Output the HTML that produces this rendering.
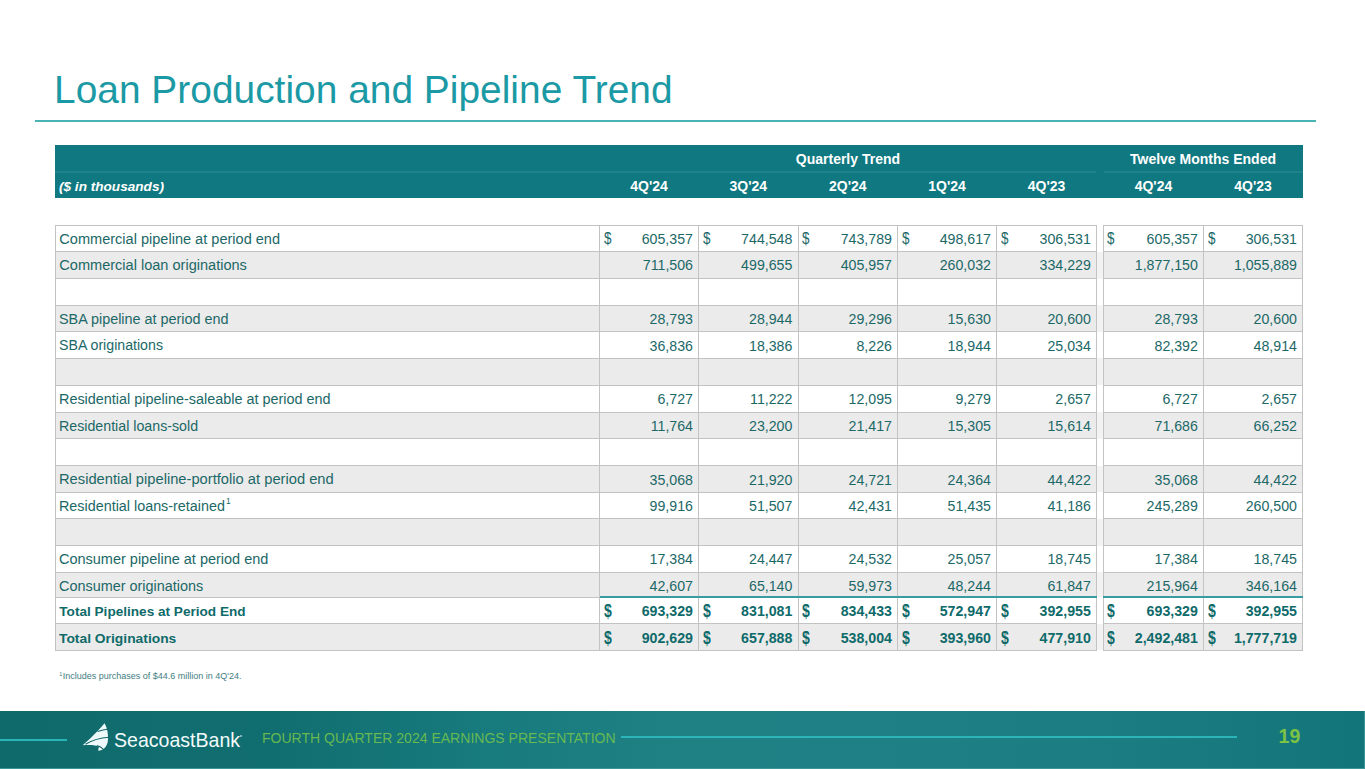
<!DOCTYPE html>
<html><head><meta charset="utf-8"><style>
html,body{margin:0;padding:0;}
body{width:1365px;height:769px;position:relative;overflow:hidden;background:#fff;font-family:"Liberation Sans", sans-serif;}
sup{font-size:8.5px;vertical-align:0;position:relative;top:-7px;margin-left:1px;}
</style></head><body>
<div style="position:absolute;top:70.49px;font-size:39.0px;line-height:39.0px;color:#1b9aa5;font-weight:normal;font-style:normal;white-space:nowrap;left:54.10px;transform:scaleX(0.9975);transform-origin:0 0;">Loan Production and Pipeline Trend</div>
<div style="position:absolute;left:34.5px;top:119.6px;width:1281.3px;height:2.0px;background:#48b4b3;"></div>
<div style="position:absolute;left:55.2px;top:145.3px;width:1247.8px;height:52.8px;background:#107880;"></div>
<div style="position:absolute;left:55.2px;top:171.4px;width:1041.2px;height:1.2px;background:#1f838b;"></div>
<div style="position:absolute;left:1103.6px;top:171.4px;width:199.4px;height:1.2px;background:#1f838b;"></div>
<div style="position:absolute;top:152.05px;font-size:14px;line-height:14px;color:#fff;font-weight:bold;font-style:normal;white-space:nowrap;left:697.95px;width:300px;text-align:center;">Quarterly Trend</div>
<div style="position:absolute;top:152.05px;font-size:14px;line-height:14px;color:#fff;font-weight:bold;font-style:normal;white-space:nowrap;left:1053.00px;width:300px;text-align:center;">Twelve Months Ended</div>
<div style="position:absolute;top:179.69px;font-size:13.6px;line-height:13.6px;color:#fff;font-weight:bold;font-style:italic;white-space:nowrap;left:59.00px;">($ in thousands)</div>
<div style="position:absolute;top:179.35px;font-size:14px;line-height:14px;color:#fff;font-weight:bold;font-style:normal;white-space:nowrap;left:499.05px;width:300px;text-align:center;">4Q'24</div>
<div style="position:absolute;top:179.35px;font-size:14px;line-height:14px;color:#fff;font-weight:bold;font-style:normal;white-space:nowrap;left:598.30px;width:300px;text-align:center;">3Q'24</div>
<div style="position:absolute;top:179.35px;font-size:14px;line-height:14px;color:#fff;font-weight:bold;font-style:normal;white-space:nowrap;left:697.80px;width:300px;text-align:center;">2Q'24</div>
<div style="position:absolute;top:179.35px;font-size:14px;line-height:14px;color:#fff;font-weight:bold;font-style:normal;white-space:nowrap;left:797.10px;width:300px;text-align:center;">1Q'24</div>
<div style="position:absolute;top:179.35px;font-size:14px;line-height:14px;color:#fff;font-weight:bold;font-style:normal;white-space:nowrap;left:896.50px;width:300px;text-align:center;">4Q'23</div>
<div style="position:absolute;top:179.35px;font-size:14px;line-height:14px;color:#fff;font-weight:bold;font-style:normal;white-space:nowrap;left:1003.45px;width:300px;text-align:center;">4Q'24</div>
<div style="position:absolute;top:179.35px;font-size:14px;line-height:14px;color:#fff;font-weight:bold;font-style:normal;white-space:nowrap;left:1103.05px;width:300px;text-align:center;">4Q'23</div>
<div style="position:absolute;top:231.78px;font-size:14.55px;line-height:14.55px;color:#1c6867;font-weight:normal;font-style:normal;white-space:nowrap;left:59.30px;">Commercial pipeline at period end</div>
<div style="position:absolute;top:232.08px;font-size:14.2px;line-height:14.2px;color:#1c6867;font-weight:normal;font-style:normal;white-space:nowrap;right:672.00px;">605,357</div>
<div style="position:absolute;top:231.08px;font-size:16.8px;line-height:16.8px;color:#1c6867;font-weight:normal;font-style:normal;white-space:nowrap;left:603.50px;transform:scaleX(0.8);transform-origin:0 0;">$</div>
<div style="position:absolute;top:232.08px;font-size:14.2px;line-height:14.2px;color:#1c6867;font-weight:normal;font-style:normal;white-space:nowrap;right:572.60px;">744,548</div>
<div style="position:absolute;top:231.08px;font-size:16.8px;line-height:16.8px;color:#1c6867;font-weight:normal;font-style:normal;white-space:nowrap;left:702.60px;transform:scaleX(0.8);transform-origin:0 0;">$</div>
<div style="position:absolute;top:232.08px;font-size:14.2px;line-height:14.2px;color:#1c6867;font-weight:normal;font-style:normal;white-space:nowrap;right:473.00px;">743,789</div>
<div style="position:absolute;top:231.08px;font-size:16.8px;line-height:16.8px;color:#1c6867;font-weight:normal;font-style:normal;white-space:nowrap;left:802.00px;transform:scaleX(0.8);transform-origin:0 0;">$</div>
<div style="position:absolute;top:232.08px;font-size:14.2px;line-height:14.2px;color:#1c6867;font-weight:normal;font-style:normal;white-space:nowrap;right:374.00px;">498,617</div>
<div style="position:absolute;top:231.08px;font-size:16.8px;line-height:16.8px;color:#1c6867;font-weight:normal;font-style:normal;white-space:nowrap;left:901.60px;transform:scaleX(0.8);transform-origin:0 0;">$</div>
<div style="position:absolute;top:232.08px;font-size:14.2px;line-height:14.2px;color:#1c6867;font-weight:normal;font-style:normal;white-space:nowrap;right:274.20px;">306,531</div>
<div style="position:absolute;top:231.08px;font-size:16.8px;line-height:16.8px;color:#1c6867;font-weight:normal;font-style:normal;white-space:nowrap;left:1000.60px;transform:scaleX(0.8);transform-origin:0 0;">$</div>
<div style="position:absolute;top:232.08px;font-size:14.2px;line-height:14.2px;color:#1c6867;font-weight:normal;font-style:normal;white-space:nowrap;right:167.10px;">605,357</div>
<div style="position:absolute;top:231.08px;font-size:16.8px;line-height:16.8px;color:#1c6867;font-weight:normal;font-style:normal;white-space:nowrap;left:1107.40px;transform:scaleX(0.8);transform-origin:0 0;">$</div>
<div style="position:absolute;top:232.08px;font-size:14.2px;line-height:14.2px;color:#1c6867;font-weight:normal;font-style:normal;white-space:nowrap;right:68.00px;">306,531</div>
<div style="position:absolute;top:231.08px;font-size:16.8px;line-height:16.8px;color:#1c6867;font-weight:normal;font-style:normal;white-space:nowrap;left:1207.50px;transform:scaleX(0.8);transform-origin:0 0;">$</div>
<div style="position:absolute;left:55.5px;top:251.6px;width:1041px;height:27.00000000000003px;background:#ebebeb;"></div>
<div style="position:absolute;left:1103.4px;top:251.6px;width:199.2px;height:27.00000000000003px;background:#ebebeb;"></div>
<div style="position:absolute;left:1096.4px;top:251.6px;width:7px;height:27.00000000000003px;background:#f3f3f3;"></div>
<div style="position:absolute;top:258.18px;font-size:14.55px;line-height:14.55px;color:#1c6867;font-weight:normal;font-style:normal;white-space:nowrap;left:59.30px;">Commercial loan originations</div>
<div style="position:absolute;top:258.48px;font-size:14.2px;line-height:14.2px;color:#1c6867;font-weight:normal;font-style:normal;white-space:nowrap;right:672.00px;">711,506</div>
<div style="position:absolute;top:258.48px;font-size:14.2px;line-height:14.2px;color:#1c6867;font-weight:normal;font-style:normal;white-space:nowrap;right:572.60px;">499,655</div>
<div style="position:absolute;top:258.48px;font-size:14.2px;line-height:14.2px;color:#1c6867;font-weight:normal;font-style:normal;white-space:nowrap;right:473.00px;">405,957</div>
<div style="position:absolute;top:258.48px;font-size:14.2px;line-height:14.2px;color:#1c6867;font-weight:normal;font-style:normal;white-space:nowrap;right:374.00px;">260,032</div>
<div style="position:absolute;top:258.48px;font-size:14.2px;line-height:14.2px;color:#1c6867;font-weight:normal;font-style:normal;white-space:nowrap;right:274.20px;">334,229</div>
<div style="position:absolute;top:258.48px;font-size:14.2px;line-height:14.2px;color:#1c6867;font-weight:normal;font-style:normal;white-space:nowrap;right:167.10px;">1,877,150</div>
<div style="position:absolute;top:258.48px;font-size:14.2px;line-height:14.2px;color:#1c6867;font-weight:normal;font-style:normal;white-space:nowrap;right:68.00px;">1,055,889</div>
<div style="position:absolute;left:55.5px;top:305.3px;width:1041px;height:26.5px;background:#ebebeb;"></div>
<div style="position:absolute;left:1103.4px;top:305.3px;width:199.2px;height:26.5px;background:#ebebeb;"></div>
<div style="position:absolute;left:1096.4px;top:305.3px;width:7px;height:26.5px;background:#f3f3f3;"></div>
<div style="position:absolute;top:311.88px;font-size:14.55px;line-height:14.55px;color:#1c6867;font-weight:normal;font-style:normal;white-space:nowrap;left:59.30px;transform:scaleX(0.9888);transform-origin:0 0;">SBA pipeline at period end</div>
<div style="position:absolute;top:312.18px;font-size:14.2px;line-height:14.2px;color:#1c6867;font-weight:normal;font-style:normal;white-space:nowrap;right:672.00px;">28,793</div>
<div style="position:absolute;top:312.18px;font-size:14.2px;line-height:14.2px;color:#1c6867;font-weight:normal;font-style:normal;white-space:nowrap;right:572.60px;">28,944</div>
<div style="position:absolute;top:312.18px;font-size:14.2px;line-height:14.2px;color:#1c6867;font-weight:normal;font-style:normal;white-space:nowrap;right:473.00px;">29,296</div>
<div style="position:absolute;top:312.18px;font-size:14.2px;line-height:14.2px;color:#1c6867;font-weight:normal;font-style:normal;white-space:nowrap;right:374.00px;">15,630</div>
<div style="position:absolute;top:312.18px;font-size:14.2px;line-height:14.2px;color:#1c6867;font-weight:normal;font-style:normal;white-space:nowrap;right:274.20px;">20,600</div>
<div style="position:absolute;top:312.18px;font-size:14.2px;line-height:14.2px;color:#1c6867;font-weight:normal;font-style:normal;white-space:nowrap;right:167.10px;">28,793</div>
<div style="position:absolute;top:312.18px;font-size:14.2px;line-height:14.2px;color:#1c6867;font-weight:normal;font-style:normal;white-space:nowrap;right:68.00px;">20,600</div>
<div style="position:absolute;top:338.38px;font-size:14.55px;line-height:14.55px;color:#1c6867;font-weight:normal;font-style:normal;white-space:nowrap;left:59.30px;transform:scaleX(0.974);transform-origin:0 0;">SBA originations</div>
<div style="position:absolute;top:338.68px;font-size:14.2px;line-height:14.2px;color:#1c6867;font-weight:normal;font-style:normal;white-space:nowrap;right:672.00px;">36,836</div>
<div style="position:absolute;top:338.68px;font-size:14.2px;line-height:14.2px;color:#1c6867;font-weight:normal;font-style:normal;white-space:nowrap;right:572.60px;">18,386</div>
<div style="position:absolute;top:338.68px;font-size:14.2px;line-height:14.2px;color:#1c6867;font-weight:normal;font-style:normal;white-space:nowrap;right:473.00px;">8,226</div>
<div style="position:absolute;top:338.68px;font-size:14.2px;line-height:14.2px;color:#1c6867;font-weight:normal;font-style:normal;white-space:nowrap;right:374.00px;">18,944</div>
<div style="position:absolute;top:338.68px;font-size:14.2px;line-height:14.2px;color:#1c6867;font-weight:normal;font-style:normal;white-space:nowrap;right:274.20px;">25,034</div>
<div style="position:absolute;top:338.68px;font-size:14.2px;line-height:14.2px;color:#1c6867;font-weight:normal;font-style:normal;white-space:nowrap;right:167.10px;">82,392</div>
<div style="position:absolute;top:338.68px;font-size:14.2px;line-height:14.2px;color:#1c6867;font-weight:normal;font-style:normal;white-space:nowrap;right:68.00px;">48,914</div>
<div style="position:absolute;left:55.5px;top:358.3px;width:1041px;height:26.899999999999977px;background:#ebebeb;"></div>
<div style="position:absolute;left:1103.4px;top:358.3px;width:199.2px;height:26.899999999999977px;background:#ebebeb;"></div>
<div style="position:absolute;left:1096.4px;top:358.3px;width:7px;height:26.899999999999977px;background:#f3f3f3;"></div>
<div style="position:absolute;top:391.78px;font-size:14.55px;line-height:14.55px;color:#1c6867;font-weight:normal;font-style:normal;white-space:nowrap;left:59.30px;transform:scaleX(0.9904);transform-origin:0 0;">Residential pipeline-saleable at period end</div>
<div style="position:absolute;top:392.08px;font-size:14.2px;line-height:14.2px;color:#1c6867;font-weight:normal;font-style:normal;white-space:nowrap;right:672.00px;">6,727</div>
<div style="position:absolute;top:392.08px;font-size:14.2px;line-height:14.2px;color:#1c6867;font-weight:normal;font-style:normal;white-space:nowrap;right:572.60px;">11,222</div>
<div style="position:absolute;top:392.08px;font-size:14.2px;line-height:14.2px;color:#1c6867;font-weight:normal;font-style:normal;white-space:nowrap;right:473.00px;">12,095</div>
<div style="position:absolute;top:392.08px;font-size:14.2px;line-height:14.2px;color:#1c6867;font-weight:normal;font-style:normal;white-space:nowrap;right:374.00px;">9,279</div>
<div style="position:absolute;top:392.08px;font-size:14.2px;line-height:14.2px;color:#1c6867;font-weight:normal;font-style:normal;white-space:nowrap;right:274.20px;">2,657</div>
<div style="position:absolute;top:392.08px;font-size:14.2px;line-height:14.2px;color:#1c6867;font-weight:normal;font-style:normal;white-space:nowrap;right:167.10px;">6,727</div>
<div style="position:absolute;top:392.08px;font-size:14.2px;line-height:14.2px;color:#1c6867;font-weight:normal;font-style:normal;white-space:nowrap;right:68.00px;">2,657</div>
<div style="position:absolute;left:55.5px;top:412.0px;width:1041px;height:26.600000000000023px;background:#ebebeb;"></div>
<div style="position:absolute;left:1103.4px;top:412.0px;width:199.2px;height:26.600000000000023px;background:#ebebeb;"></div>
<div style="position:absolute;left:1096.4px;top:412.0px;width:7px;height:26.600000000000023px;background:#f3f3f3;"></div>
<div style="position:absolute;top:418.58px;font-size:14.55px;line-height:14.55px;color:#1c6867;font-weight:normal;font-style:normal;white-space:nowrap;left:59.30px;transform:scaleX(0.977);transform-origin:0 0;">Residential loans-sold</div>
<div style="position:absolute;top:418.88px;font-size:14.2px;line-height:14.2px;color:#1c6867;font-weight:normal;font-style:normal;white-space:nowrap;right:672.00px;">11,764</div>
<div style="position:absolute;top:418.88px;font-size:14.2px;line-height:14.2px;color:#1c6867;font-weight:normal;font-style:normal;white-space:nowrap;right:572.60px;">23,200</div>
<div style="position:absolute;top:418.88px;font-size:14.2px;line-height:14.2px;color:#1c6867;font-weight:normal;font-style:normal;white-space:nowrap;right:473.00px;">21,417</div>
<div style="position:absolute;top:418.88px;font-size:14.2px;line-height:14.2px;color:#1c6867;font-weight:normal;font-style:normal;white-space:nowrap;right:374.00px;">15,305</div>
<div style="position:absolute;top:418.88px;font-size:14.2px;line-height:14.2px;color:#1c6867;font-weight:normal;font-style:normal;white-space:nowrap;right:274.20px;">15,614</div>
<div style="position:absolute;top:418.88px;font-size:14.2px;line-height:14.2px;color:#1c6867;font-weight:normal;font-style:normal;white-space:nowrap;right:167.10px;">71,686</div>
<div style="position:absolute;top:418.88px;font-size:14.2px;line-height:14.2px;color:#1c6867;font-weight:normal;font-style:normal;white-space:nowrap;right:68.00px;">66,252</div>
<div style="position:absolute;left:55.5px;top:465.8px;width:1041px;height:26.5px;background:#ebebeb;"></div>
<div style="position:absolute;left:1103.4px;top:465.8px;width:199.2px;height:26.5px;background:#ebebeb;"></div>
<div style="position:absolute;left:1096.4px;top:465.8px;width:7px;height:26.5px;background:#f3f3f3;"></div>
<div style="position:absolute;top:472.38px;font-size:14.55px;line-height:14.55px;color:#1c6867;font-weight:normal;font-style:normal;white-space:nowrap;left:59.30px;transform:scaleX(1.011);transform-origin:0 0;">Residential pipeline-portfolio at period end</div>
<div style="position:absolute;top:472.68px;font-size:14.2px;line-height:14.2px;color:#1c6867;font-weight:normal;font-style:normal;white-space:nowrap;right:672.00px;">35,068</div>
<div style="position:absolute;top:472.68px;font-size:14.2px;line-height:14.2px;color:#1c6867;font-weight:normal;font-style:normal;white-space:nowrap;right:572.60px;">21,920</div>
<div style="position:absolute;top:472.68px;font-size:14.2px;line-height:14.2px;color:#1c6867;font-weight:normal;font-style:normal;white-space:nowrap;right:473.00px;">24,721</div>
<div style="position:absolute;top:472.68px;font-size:14.2px;line-height:14.2px;color:#1c6867;font-weight:normal;font-style:normal;white-space:nowrap;right:374.00px;">24,364</div>
<div style="position:absolute;top:472.68px;font-size:14.2px;line-height:14.2px;color:#1c6867;font-weight:normal;font-style:normal;white-space:nowrap;right:274.20px;">44,422</div>
<div style="position:absolute;top:472.68px;font-size:14.2px;line-height:14.2px;color:#1c6867;font-weight:normal;font-style:normal;white-space:nowrap;right:167.10px;">35,068</div>
<div style="position:absolute;top:472.68px;font-size:14.2px;line-height:14.2px;color:#1c6867;font-weight:normal;font-style:normal;white-space:nowrap;right:68.00px;">44,422</div>
<div style="position:absolute;top:498.88px;font-size:14.55px;line-height:14.55px;color:#1c6867;font-weight:normal;font-style:normal;white-space:nowrap;left:59.30px;transform:scaleX(0.9866);transform-origin:0 0;">Residential loans-retained<sup>1</sup></div>
<div style="position:absolute;top:499.18px;font-size:14.2px;line-height:14.2px;color:#1c6867;font-weight:normal;font-style:normal;white-space:nowrap;right:672.00px;">99,916</div>
<div style="position:absolute;top:499.18px;font-size:14.2px;line-height:14.2px;color:#1c6867;font-weight:normal;font-style:normal;white-space:nowrap;right:572.60px;">51,507</div>
<div style="position:absolute;top:499.18px;font-size:14.2px;line-height:14.2px;color:#1c6867;font-weight:normal;font-style:normal;white-space:nowrap;right:473.00px;">42,431</div>
<div style="position:absolute;top:499.18px;font-size:14.2px;line-height:14.2px;color:#1c6867;font-weight:normal;font-style:normal;white-space:nowrap;right:374.00px;">51,435</div>
<div style="position:absolute;top:499.18px;font-size:14.2px;line-height:14.2px;color:#1c6867;font-weight:normal;font-style:normal;white-space:nowrap;right:274.20px;">41,186</div>
<div style="position:absolute;top:499.18px;font-size:14.2px;line-height:14.2px;color:#1c6867;font-weight:normal;font-style:normal;white-space:nowrap;right:167.10px;">245,289</div>
<div style="position:absolute;top:499.18px;font-size:14.2px;line-height:14.2px;color:#1c6867;font-weight:normal;font-style:normal;white-space:nowrap;right:68.00px;">260,500</div>
<div style="position:absolute;left:55.5px;top:518.9px;width:1041px;height:26.700000000000045px;background:#ebebeb;"></div>
<div style="position:absolute;left:1103.4px;top:518.9px;width:199.2px;height:26.700000000000045px;background:#ebebeb;"></div>
<div style="position:absolute;left:1096.4px;top:518.9px;width:7px;height:26.700000000000045px;background:#f3f3f3;"></div>
<div style="position:absolute;top:552.18px;font-size:14.55px;line-height:14.55px;color:#1c6867;font-weight:normal;font-style:normal;white-space:nowrap;left:59.30px;transform:scaleX(0.9957);transform-origin:0 0;">Consumer pipeline at period end</div>
<div style="position:absolute;top:552.48px;font-size:14.2px;line-height:14.2px;color:#1c6867;font-weight:normal;font-style:normal;white-space:nowrap;right:672.00px;">17,384</div>
<div style="position:absolute;top:552.48px;font-size:14.2px;line-height:14.2px;color:#1c6867;font-weight:normal;font-style:normal;white-space:nowrap;right:572.60px;">24,447</div>
<div style="position:absolute;top:552.48px;font-size:14.2px;line-height:14.2px;color:#1c6867;font-weight:normal;font-style:normal;white-space:nowrap;right:473.00px;">24,532</div>
<div style="position:absolute;top:552.48px;font-size:14.2px;line-height:14.2px;color:#1c6867;font-weight:normal;font-style:normal;white-space:nowrap;right:374.00px;">25,057</div>
<div style="position:absolute;top:552.48px;font-size:14.2px;line-height:14.2px;color:#1c6867;font-weight:normal;font-style:normal;white-space:nowrap;right:274.20px;">18,745</div>
<div style="position:absolute;top:552.48px;font-size:14.2px;line-height:14.2px;color:#1c6867;font-weight:normal;font-style:normal;white-space:nowrap;right:167.10px;">17,384</div>
<div style="position:absolute;top:552.48px;font-size:14.2px;line-height:14.2px;color:#1c6867;font-weight:normal;font-style:normal;white-space:nowrap;right:68.00px;">18,745</div>
<div style="position:absolute;left:55.5px;top:572.3px;width:1041px;height:24.700000000000045px;background:#ebebeb;"></div>
<div style="position:absolute;left:1103.4px;top:572.3px;width:199.2px;height:24.700000000000045px;background:#ebebeb;"></div>
<div style="position:absolute;left:1096.4px;top:572.3px;width:7px;height:24.700000000000045px;background:#f3f3f3;"></div>
<div style="position:absolute;top:578.88px;font-size:14.55px;line-height:14.55px;color:#1c6867;font-weight:normal;font-style:normal;white-space:nowrap;left:59.30px;transform:scaleX(0.991);transform-origin:0 0;">Consumer originations</div>
<div style="position:absolute;top:579.18px;font-size:14.2px;line-height:14.2px;color:#1c6867;font-weight:normal;font-style:normal;white-space:nowrap;right:672.00px;">42,607</div>
<div style="position:absolute;top:579.18px;font-size:14.2px;line-height:14.2px;color:#1c6867;font-weight:normal;font-style:normal;white-space:nowrap;right:572.60px;">65,140</div>
<div style="position:absolute;top:579.18px;font-size:14.2px;line-height:14.2px;color:#1c6867;font-weight:normal;font-style:normal;white-space:nowrap;right:473.00px;">59,973</div>
<div style="position:absolute;top:579.18px;font-size:14.2px;line-height:14.2px;color:#1c6867;font-weight:normal;font-style:normal;white-space:nowrap;right:374.00px;">48,244</div>
<div style="position:absolute;top:579.18px;font-size:14.2px;line-height:14.2px;color:#1c6867;font-weight:normal;font-style:normal;white-space:nowrap;right:274.20px;">61,847</div>
<div style="position:absolute;top:579.18px;font-size:14.2px;line-height:14.2px;color:#1c6867;font-weight:normal;font-style:normal;white-space:nowrap;right:167.10px;">215,964</div>
<div style="position:absolute;top:579.18px;font-size:14.2px;line-height:14.2px;color:#1c6867;font-weight:normal;font-style:normal;white-space:nowrap;right:68.00px;">346,164</div>
<div style="position:absolute;top:604.99px;font-size:13.6px;line-height:13.6px;color:#0f6a6a;font-weight:bold;font-style:normal;white-space:nowrap;left:59.30px;">Total Pipelines at Period End</div>
<div style="position:absolute;top:604.48px;font-size:14.2px;line-height:14.2px;color:#0f6a6a;font-weight:bold;font-style:normal;white-space:nowrap;right:672.00px;">693,329</div>
<div style="position:absolute;top:603.10px;font-size:17.6px;line-height:17.6px;color:#0f6a6a;font-weight:bold;font-style:normal;white-space:nowrap;left:603.50px;transform:scaleX(0.8);transform-origin:0 0;">$</div>
<div style="position:absolute;top:604.48px;font-size:14.2px;line-height:14.2px;color:#0f6a6a;font-weight:bold;font-style:normal;white-space:nowrap;right:572.60px;">831,081</div>
<div style="position:absolute;top:603.10px;font-size:17.6px;line-height:17.6px;color:#0f6a6a;font-weight:bold;font-style:normal;white-space:nowrap;left:702.60px;transform:scaleX(0.8);transform-origin:0 0;">$</div>
<div style="position:absolute;top:604.48px;font-size:14.2px;line-height:14.2px;color:#0f6a6a;font-weight:bold;font-style:normal;white-space:nowrap;right:473.00px;">834,433</div>
<div style="position:absolute;top:603.10px;font-size:17.6px;line-height:17.6px;color:#0f6a6a;font-weight:bold;font-style:normal;white-space:nowrap;left:802.00px;transform:scaleX(0.8);transform-origin:0 0;">$</div>
<div style="position:absolute;top:604.48px;font-size:14.2px;line-height:14.2px;color:#0f6a6a;font-weight:bold;font-style:normal;white-space:nowrap;right:374.00px;">572,947</div>
<div style="position:absolute;top:603.10px;font-size:17.6px;line-height:17.6px;color:#0f6a6a;font-weight:bold;font-style:normal;white-space:nowrap;left:901.60px;transform:scaleX(0.8);transform-origin:0 0;">$</div>
<div style="position:absolute;top:604.48px;font-size:14.2px;line-height:14.2px;color:#0f6a6a;font-weight:bold;font-style:normal;white-space:nowrap;right:274.20px;">392,955</div>
<div style="position:absolute;top:603.10px;font-size:17.6px;line-height:17.6px;color:#0f6a6a;font-weight:bold;font-style:normal;white-space:nowrap;left:1000.60px;transform:scaleX(0.8);transform-origin:0 0;">$</div>
<div style="position:absolute;top:604.48px;font-size:14.2px;line-height:14.2px;color:#0f6a6a;font-weight:bold;font-style:normal;white-space:nowrap;right:167.10px;">693,329</div>
<div style="position:absolute;top:603.10px;font-size:17.6px;line-height:17.6px;color:#0f6a6a;font-weight:bold;font-style:normal;white-space:nowrap;left:1107.40px;transform:scaleX(0.8);transform-origin:0 0;">$</div>
<div style="position:absolute;top:604.48px;font-size:14.2px;line-height:14.2px;color:#0f6a6a;font-weight:bold;font-style:normal;white-space:nowrap;right:68.00px;">392,955</div>
<div style="position:absolute;top:603.10px;font-size:17.6px;line-height:17.6px;color:#0f6a6a;font-weight:bold;font-style:normal;white-space:nowrap;left:1207.50px;transform:scaleX(0.8);transform-origin:0 0;">$</div>
<div style="position:absolute;left:55.5px;top:623.9px;width:1041px;height:26.600000000000023px;background:#ebebeb;"></div>
<div style="position:absolute;left:1103.4px;top:623.9px;width:199.2px;height:26.600000000000023px;background:#ebebeb;"></div>
<div style="position:absolute;left:1096.4px;top:623.9px;width:7px;height:26.600000000000023px;background:#f3f3f3;"></div>
<div style="position:absolute;top:631.89px;font-size:13.6px;line-height:13.6px;color:#0f6a6a;font-weight:bold;font-style:normal;white-space:nowrap;left:59.30px;transform:scaleX(1.0175);transform-origin:0 0;">Total Originations</div>
<div style="position:absolute;top:631.38px;font-size:14.2px;line-height:14.2px;color:#0f6a6a;font-weight:bold;font-style:normal;white-space:nowrap;right:672.00px;">902,629</div>
<div style="position:absolute;top:630.00px;font-size:17.6px;line-height:17.6px;color:#0f6a6a;font-weight:bold;font-style:normal;white-space:nowrap;left:603.50px;transform:scaleX(0.8);transform-origin:0 0;">$</div>
<div style="position:absolute;top:631.38px;font-size:14.2px;line-height:14.2px;color:#0f6a6a;font-weight:bold;font-style:normal;white-space:nowrap;right:572.60px;">657,888</div>
<div style="position:absolute;top:630.00px;font-size:17.6px;line-height:17.6px;color:#0f6a6a;font-weight:bold;font-style:normal;white-space:nowrap;left:702.60px;transform:scaleX(0.8);transform-origin:0 0;">$</div>
<div style="position:absolute;top:631.38px;font-size:14.2px;line-height:14.2px;color:#0f6a6a;font-weight:bold;font-style:normal;white-space:nowrap;right:473.00px;">538,004</div>
<div style="position:absolute;top:630.00px;font-size:17.6px;line-height:17.6px;color:#0f6a6a;font-weight:bold;font-style:normal;white-space:nowrap;left:802.00px;transform:scaleX(0.8);transform-origin:0 0;">$</div>
<div style="position:absolute;top:631.38px;font-size:14.2px;line-height:14.2px;color:#0f6a6a;font-weight:bold;font-style:normal;white-space:nowrap;right:374.00px;">393,960</div>
<div style="position:absolute;top:630.00px;font-size:17.6px;line-height:17.6px;color:#0f6a6a;font-weight:bold;font-style:normal;white-space:nowrap;left:901.60px;transform:scaleX(0.8);transform-origin:0 0;">$</div>
<div style="position:absolute;top:631.38px;font-size:14.2px;line-height:14.2px;color:#0f6a6a;font-weight:bold;font-style:normal;white-space:nowrap;right:274.20px;">477,910</div>
<div style="position:absolute;top:630.00px;font-size:17.6px;line-height:17.6px;color:#0f6a6a;font-weight:bold;font-style:normal;white-space:nowrap;left:1000.60px;transform:scaleX(0.8);transform-origin:0 0;">$</div>
<div style="position:absolute;top:631.38px;font-size:14.2px;line-height:14.2px;color:#0f6a6a;font-weight:bold;font-style:normal;white-space:nowrap;right:167.10px;">2,492,481</div>
<div style="position:absolute;top:630.00px;font-size:17.6px;line-height:17.6px;color:#0f6a6a;font-weight:bold;font-style:normal;white-space:nowrap;left:1107.40px;transform:scaleX(0.8);transform-origin:0 0;">$</div>
<div style="position:absolute;top:631.38px;font-size:14.2px;line-height:14.2px;color:#0f6a6a;font-weight:bold;font-style:normal;white-space:nowrap;right:68.00px;">1,777,719</div>
<div style="position:absolute;top:630.00px;font-size:17.6px;line-height:17.6px;color:#0f6a6a;font-weight:bold;font-style:normal;white-space:nowrap;left:1207.50px;transform:scaleX(0.8);transform-origin:0 0;">$</div>
<div style="position:absolute;left:55.0px;top:224.7px;width:1041.9px;height:1.1px;background:#c3c3c3;"></div>
<div style="position:absolute;left:1102.9px;top:224.7px;width:200.2px;height:1.1px;background:#c3c3c3;"></div>
<div style="position:absolute;left:55.0px;top:251.1px;width:1041.9px;height:1.1px;background:#c3c3c3;"></div>
<div style="position:absolute;left:1102.9px;top:251.1px;width:200.2px;height:1.1px;background:#c3c3c3;"></div>
<div style="position:absolute;left:55.0px;top:278.1px;width:1041.9px;height:1.1px;background:#c3c3c3;"></div>
<div style="position:absolute;left:1102.9px;top:278.1px;width:200.2px;height:1.1px;background:#c3c3c3;"></div>
<div style="position:absolute;left:55.0px;top:304.8px;width:1041.9px;height:1.1px;background:#c3c3c3;"></div>
<div style="position:absolute;left:1102.9px;top:304.8px;width:200.2px;height:1.1px;background:#c3c3c3;"></div>
<div style="position:absolute;left:55.0px;top:331.3px;width:1041.9px;height:1.1px;background:#c3c3c3;"></div>
<div style="position:absolute;left:1102.9px;top:331.3px;width:200.2px;height:1.1px;background:#c3c3c3;"></div>
<div style="position:absolute;left:55.0px;top:357.8px;width:1041.9px;height:1.1px;background:#c3c3c3;"></div>
<div style="position:absolute;left:1102.9px;top:357.8px;width:200.2px;height:1.1px;background:#c3c3c3;"></div>
<div style="position:absolute;left:55.0px;top:384.7px;width:1041.9px;height:1.1px;background:#c3c3c3;"></div>
<div style="position:absolute;left:1102.9px;top:384.7px;width:200.2px;height:1.1px;background:#c3c3c3;"></div>
<div style="position:absolute;left:55.0px;top:411.5px;width:1041.9px;height:1.1px;background:#c3c3c3;"></div>
<div style="position:absolute;left:1102.9px;top:411.5px;width:200.2px;height:1.1px;background:#c3c3c3;"></div>
<div style="position:absolute;left:55.0px;top:438.1px;width:1041.9px;height:1.1px;background:#c3c3c3;"></div>
<div style="position:absolute;left:1102.9px;top:438.1px;width:200.2px;height:1.1px;background:#c3c3c3;"></div>
<div style="position:absolute;left:55.0px;top:465.3px;width:1041.9px;height:1.1px;background:#c3c3c3;"></div>
<div style="position:absolute;left:1102.9px;top:465.3px;width:200.2px;height:1.1px;background:#c3c3c3;"></div>
<div style="position:absolute;left:55.0px;top:491.8px;width:1041.9px;height:1.1px;background:#c3c3c3;"></div>
<div style="position:absolute;left:1102.9px;top:491.8px;width:200.2px;height:1.1px;background:#c3c3c3;"></div>
<div style="position:absolute;left:55.0px;top:518.4px;width:1041.9px;height:1.1px;background:#c3c3c3;"></div>
<div style="position:absolute;left:1102.9px;top:518.4px;width:200.2px;height:1.1px;background:#c3c3c3;"></div>
<div style="position:absolute;left:55.0px;top:545.1px;width:1041.9px;height:1.1px;background:#c3c3c3;"></div>
<div style="position:absolute;left:1102.9px;top:545.1px;width:200.2px;height:1.1px;background:#c3c3c3;"></div>
<div style="position:absolute;left:55.0px;top:571.8px;width:1041.9px;height:1.1px;background:#c3c3c3;"></div>
<div style="position:absolute;left:1102.9px;top:571.8px;width:200.2px;height:1.1px;background:#c3c3c3;"></div>
<div style="position:absolute;left:55.0px;top:596.5px;width:1041.9px;height:1.1px;background:#c3c3c3;"></div>
<div style="position:absolute;left:1102.9px;top:596.5px;width:200.2px;height:1.1px;background:#c3c3c3;"></div>
<div style="position:absolute;left:55.0px;top:623.4px;width:1041.9px;height:1.1px;background:#c3c3c3;"></div>
<div style="position:absolute;left:1102.9px;top:623.4px;width:200.2px;height:1.1px;background:#c3c3c3;"></div>
<div style="position:absolute;left:55.0px;top:650.0px;width:1041.9px;height:1.1px;background:#c3c3c3;"></div>
<div style="position:absolute;left:1102.9px;top:650.0px;width:200.2px;height:1.1px;background:#c3c3c3;"></div>
<div style="position:absolute;left:55.0px;top:224.7px;width:1.1px;height:426.3px;background:#c3c3c3;"></div>
<div style="position:absolute;left:599.0px;top:224.7px;width:1.1px;height:426.3px;background:#c3c3c3;"></div>
<div style="position:absolute;left:698.1px;top:224.7px;width:1.1px;height:426.3px;background:#c3c3c3;"></div>
<div style="position:absolute;left:797.5px;top:224.7px;width:1.1px;height:426.3px;background:#c3c3c3;"></div>
<div style="position:absolute;left:897.1px;top:224.7px;width:1.1px;height:426.3px;background:#c3c3c3;"></div>
<div style="position:absolute;left:996.1px;top:224.7px;width:1.1px;height:426.3px;background:#c3c3c3;"></div>
<div style="position:absolute;left:1095.9px;top:224.7px;width:1.1px;height:426.3px;background:#c3c3c3;"></div>
<div style="position:absolute;left:1102.9px;top:224.7px;width:1.1px;height:426.3px;background:#c3c3c3;"></div>
<div style="position:absolute;left:1203.0px;top:224.7px;width:1.1px;height:426.3px;background:#c3c3c3;"></div>
<div style="position:absolute;left:1302.1px;top:224.7px;width:1.1px;height:426.3px;background:#c3c3c3;"></div>
<div style="position:absolute;left:599.5px;top:596.0px;width:497px;height:2.0px;background:#3a9ca3;"></div>
<div style="position:absolute;left:1103.4px;top:596.0px;width:199.2px;height:2.0px;background:#3a9ca3;"></div>
<div style="position:absolute;top:672.38px;font-size:9.0px;line-height:9.0px;color:#3f7d7f;font-weight:normal;font-style:normal;white-space:nowrap;left:59.20px;"><sup style="font-size:5.5px;vertical-align:0;position:relative;top:-3.5px;margin:0 0.5px 0 0">1</sup>Includes purchases of $44.6 million in 4Q'24.</div>
<div style="position:absolute;left:0;top:710.5px;width:1365px;height:58.5px;background:linear-gradient(90deg,#0f6a6b 0%,#116e70 20%,#177a7d 35%,#1f8184 50%,#1e8084 68%,#1b7d81 82%,#127579 100%);overflow:hidden"></div>
<div style="position:absolute;left:0px;top:768px;width:1365px;height:1px;background:#3c9698;"></div>
<div style="position:absolute;left:1364px;top:710.5px;width:1px;height:58.5px;background:#3c9698;"></div>
<div style="position:absolute;left:0px;top:739px;width:66.7px;height:2px;background:#2bb5b8;"></div>
<div style="position:absolute;left:620.6px;top:736.2px;width:616.5px;height:2px;background:#2bb5b8;"></div>
<svg style="position:absolute;left:78px;top:718px" width="40" height="38" viewBox="0 0 40 38">
<path d="M4.7 27.2 C 11.8 21.4, 20.8 12.2, 26.5 5.3 C 29.5 10, 30.6 18, 29.8 23.5 C 29 28.5, 25.5 32.5, 20.1 32.8 C 20.4 31.2, 20.6 30, 20.9 29 C 19.5 28, 17 27.4, 13 27 C 10 26.8, 7 26.9, 4.7 27.2 Z" fill="#eefafa"/>
<path d="M19.7 13.5 Q 25 11.6, 30.6 11" stroke="#0f6466" stroke-width="1.1" fill="none"/>
<path d="M7.5 26.2 C 12 23.5, 20 19.8, 30.8 19.2" stroke="#0f6466" stroke-width="1.1" fill="none"/>
<path d="M18.8 27.6 Q 23 28.5, 25.5 31.5" stroke="#0f6466" stroke-width="1.1" fill="none"/>
</svg>
<div style="position:absolute;top:729.69px;font-size:20.8px;line-height:20.8px;color:#f2fbfb;font-weight:normal;font-style:normal;white-space:nowrap;left:113.50px;transform:scaleX(0.94);transform-origin:0 0;">SeacoastBank</div>
<div style="position:absolute;left:240px;top:735px;width:2px;height:2px;border-radius:1px;background:#9fcfd0"></div>
<div style="position:absolute;top:730.67px;font-size:14.8px;line-height:14.8px;color:rgba(116,196,74,0.88);font-weight:normal;font-style:normal;white-space:nowrap;left:261.80px;transform:scaleX(0.948);transform-origin:0 0;">FOURTH QUARTER 2024 EARNINGS PRESENTATION</div>
<div style="position:absolute;top:726.69px;font-size:19.5px;line-height:19.5px;color:#7cc243;font-weight:bold;font-style:normal;white-space:nowrap;left:1278.60px;">19</div>
</body></html>
